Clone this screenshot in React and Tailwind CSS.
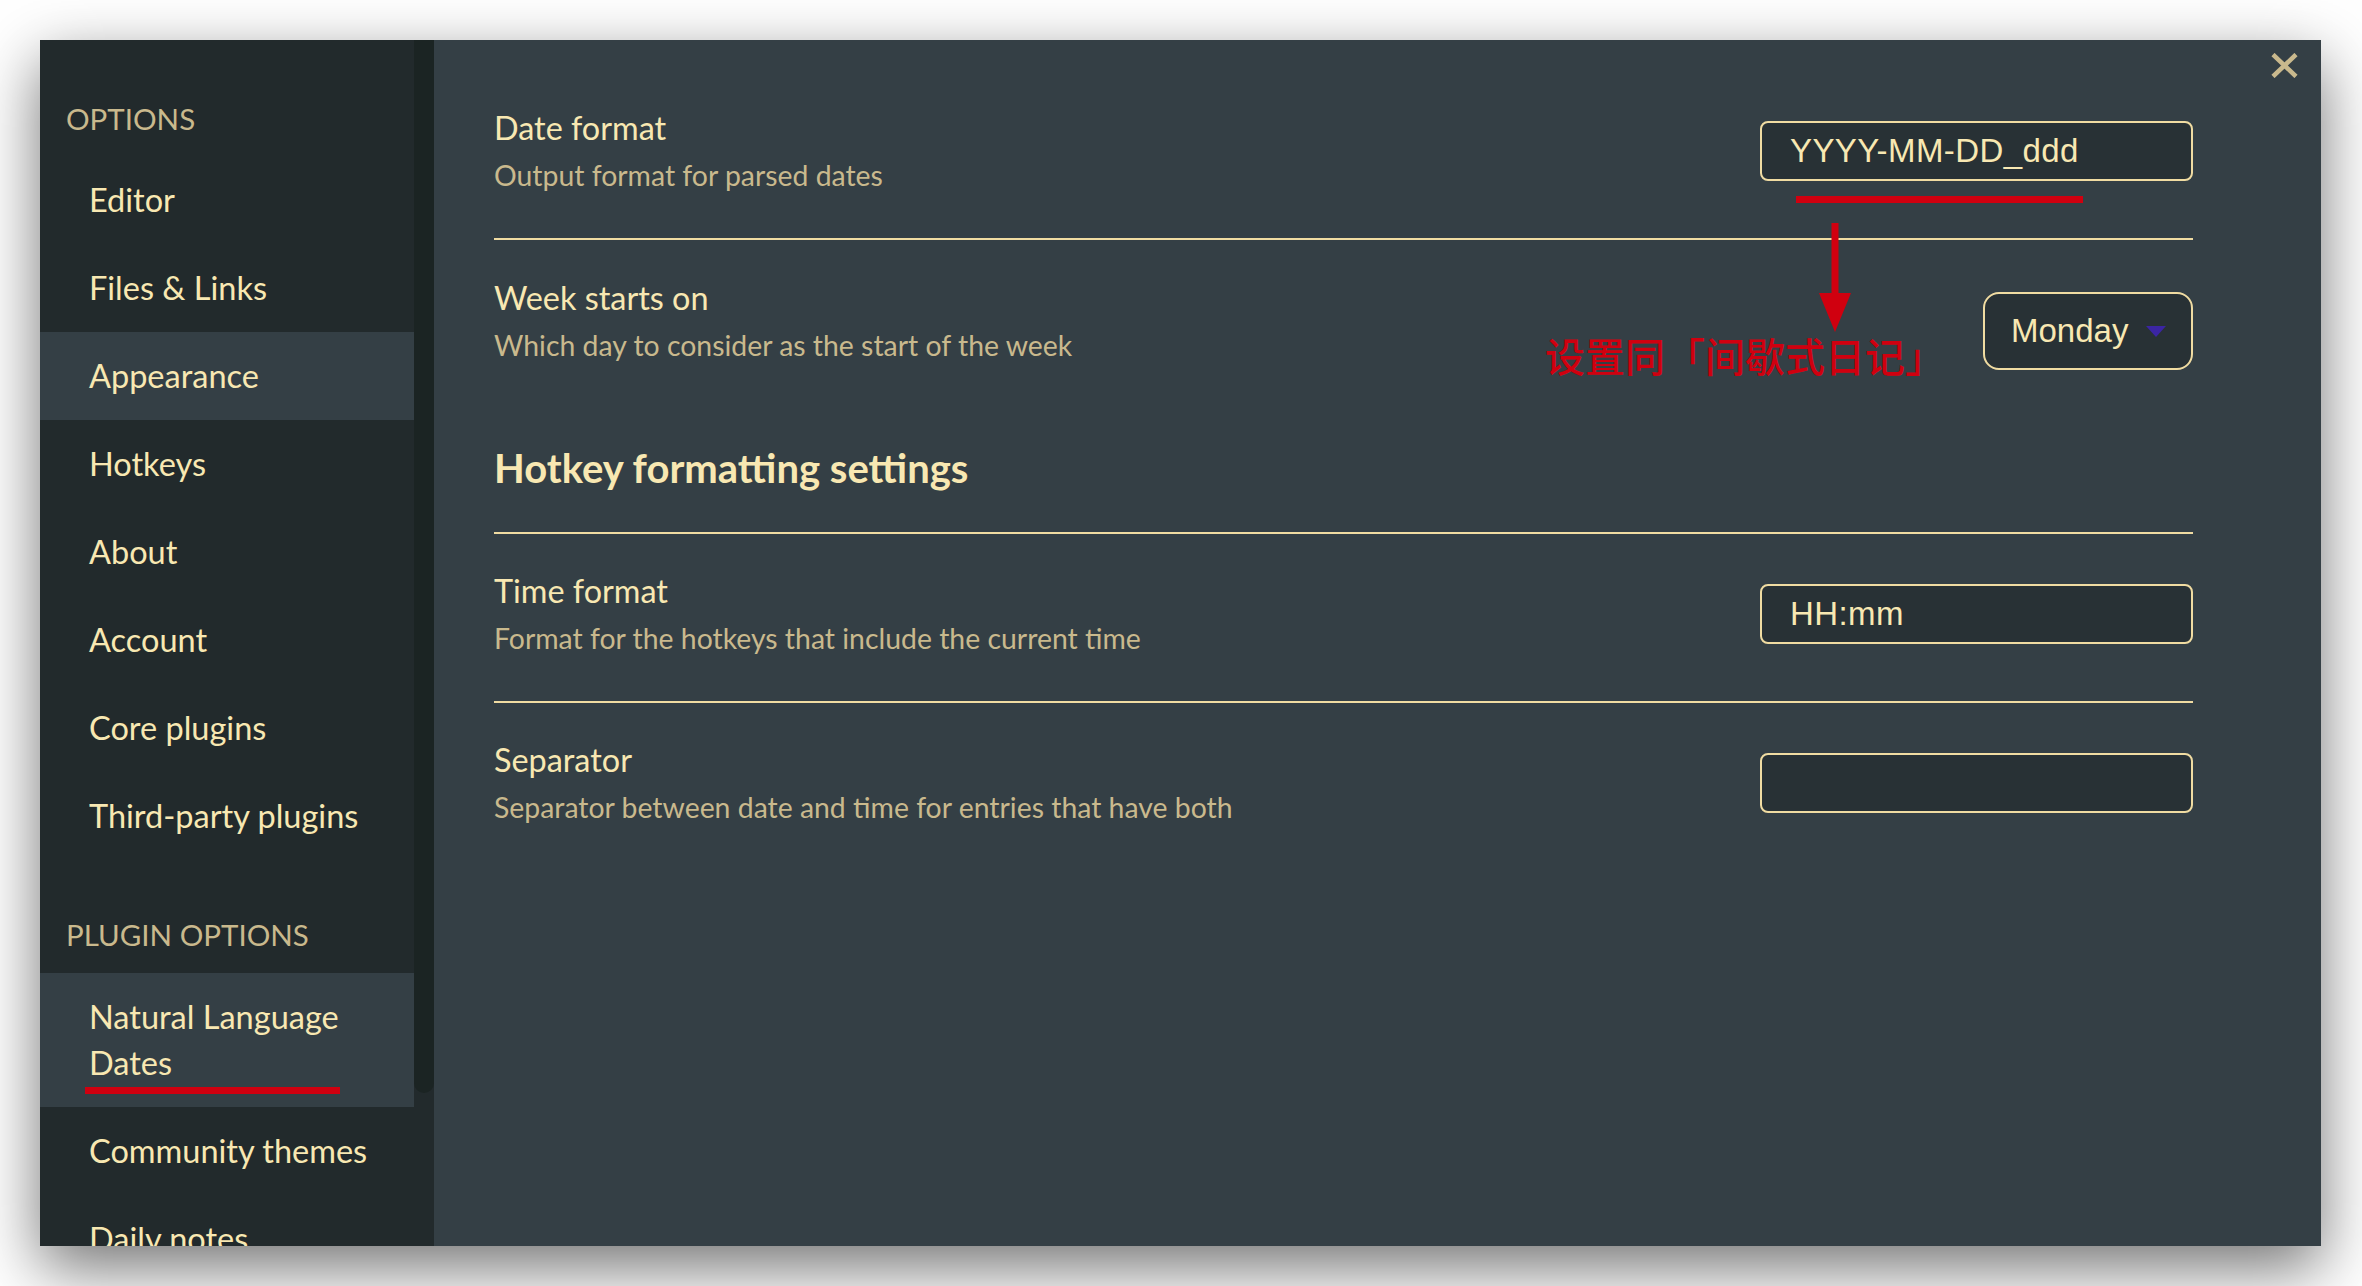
import React from "react";

const cream = "text-[#f8e8b2]";
const tan = "text-[#c9b98d]";

function SideItem({ label, active, children }) {
  return (
    <div
      className={`pl-[49px] pr-[20px] py-[21px] text-[32.5px] leading-[46px] whitespace-nowrap ${cream} ${
        active ? "bg-[#343f45]" : ""
      }`}
    >
      {children || label}
    </div>
  );
}

function SideHeader({ label, pt, mb }) {
  return (
    <div
      className={`pl-[26px] text-[29.5px] leading-[40px] uppercase ${tan} ${pt} ${mb}`}
    >
      {label}
    </div>
  );
}

function Info({ title, desc }) {
  return (
    <div className="flex flex-col">
      <div className={`text-[32.4px] leading-[48px] ${cream}`}>{title}</div>
      <div className={`text-[28.4px] leading-[46px] ${tan}`}>{desc}</div>
    </div>
  );
}

function TextInput({ value }) {
  return (
    <div
      className="w-[433px] h-[60px] border-2 border-[#f0dca2] rounded-[8px] bg-[#283135] pl-[28px] flex items-center text-[33px] tracking-[0.4px] text-[#f8e8b2]"
      style={{ fontFamily: '"Liberation Sans", Arial, sans-serif' }}
    >
      {value}
    </div>
  );
}

export default function App() {
  return (
    <div
      className="relative w-[2362px] h-[1286px] bg-white overflow-hidden pt-[40px] pl-[40px]"
      style={{ fontFamily: 'Lato, "Noto Sans", sans-serif' }}
    >
      <div className="w-[2281px] h-[1206px] flex overflow-hidden shadow-[0_22px_60px_rgba(0,0,0,0.55)]">
        {/* Sidebar */}
        <div className="w-[374px] h-full bg-[#222a2c] flex flex-col overflow-hidden shrink-0">
          <SideHeader label="Options" pt="pt-[59px]" mb="mb-[17px]" />
          <SideItem label="Editor" />
          <SideItem label="Files & Links" />
          <SideItem label="Appearance" active />
          <SideItem label="Hotkeys" />
          <SideItem label="About" />
          <SideItem label="Account" />
          <SideItem label="Core plugins" />
          <SideItem label="Third-party plugins" />
          <SideHeader label="Plugin options" pt="pt-[55px]" mb="mb-[18px]" />
          <SideItem active>
            Natural Language
            <br />
            Dates
          </SideItem>
          <SideItem label="Community themes" />
          <SideItem label="Daily notes" />
        </div>
        {/* Scrollbar */}
        <div className="w-[20px] h-full bg-[#222a2c] shrink-0 flex flex-col">
          <div className="w-[20px] h-[1053px] bg-[#1b2423] rounded-b-[10px]" />
        </div>
        {/* Main */}
        <div className="relative flex-1 h-full bg-[#343f45] pl-[60px] pr-[128px] pt-[30px]">
          {/* close */}
          <svg
            className="absolute top-[13px] left-[1837px]"
            width="27"
            height="25"
            viewBox="0 0 27 25"
          >
            <path
              d="M2 1.5 L25 23.5 M25 1.5 L2 23.5"
              stroke="#c9b98d"
              strokeWidth="4.5"
              strokeLinecap="butt"
            />
          </svg>

          <div className="flex items-center justify-between pt-[34px] pb-[40px] border-b-2 border-[#f0dca2]">
            <Info title="Date format" desc="Output format for parsed dates" />
            <TextInput value="YYYY-MM-DD_ddd" />
          </div>

          <div className="flex items-center justify-between pt-[34px] pb-[40px]">
            <Info
              title="Week starts on"
              desc="Which day to consider as the start of the week"
            />
            <div
              className="mt-[18px] -mb-[2px] w-[210px] h-[78px] border-2 border-[#f0dca2] rounded-[16px] bg-[#283135] pl-[26px] flex items-center gap-[18px] text-[33px] text-[#f8e8b2]"
              style={{ fontFamily: '"Liberation Sans", Arial, sans-serif' }}
            >
              <span>Monday</span>
              <svg width="20" height="11" viewBox="0 0 20 11">
                <path d="M0 0 H20 L10 11 Z" fill="#3b25a3" />
              </svg>
            </div>
          </div>

          <div
            className={`pt-[36px] pb-[40px] border-b-2 border-[#f0dca2] text-[40px] leading-[48px] font-bold ${cream}`}
          >
            Hotkey formatting settings
          </div>

          <div className="flex items-center justify-between pt-[33px] pb-[40px] border-b-2 border-[#f0dca2]">
            <Info
              title="Time format"
              desc="Format for the hotkeys that include the current time"
            />
            <TextInput value="HH:mm" />
          </div>

          <div className="flex items-center justify-between pt-[33px] pb-[40px]">
            <Info
              title="Separator"
              desc="Separator between date and time for entries that have both"
            />
            <TextInput value="" />
          </div>
        </div>
      </div>

      {/* Red annotations (overlays) */}
      <div className="absolute left-[1796px] top-[196px] w-[287px] h-[7px] bg-[#d0000f]" />
      <svg
        className="absolute left-[1818px] top-[223px]"
        width="34"
        height="110"
        viewBox="0 0 34 110"
      >
        <rect x="13.5" y="0" width="7" height="72" fill="#d0000f" />
        <path d="M1 70 H33 L17 109 Z" fill="#d0000f" />
      </svg>
      <div
        className="absolute left-[1545px] top-[330px] text-[40px] leading-[50px] font-medium text-[#d0000f] whitespace-nowrap"
        style={{ fontFamily: '"Noto Sans CJK SC", "Noto Sans", sans-serif' }}
      >
        设置同「间歇式日记」
      </div>
      <div className="absolute left-[85px] top-[1087px] w-[255px] h-[7px] bg-[#d0000f]" />
    </div>
  );
}
